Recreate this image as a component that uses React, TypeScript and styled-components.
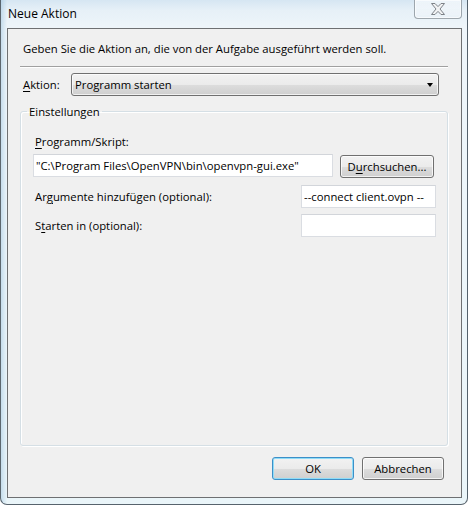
import React from "react";
import styled, { createGlobalStyle } from "styled-components";

const Global = createGlobalStyle`
  html, body { margin: 0; padding: 0; overflow: hidden; background: #ffffff; }
  body {
    font-family: "Open Sans", "Noto Sans", sans-serif;
    font-size: 11.3px;
    color: #000;
  }
  * { box-sizing: border-box; }
`;

const Window = styled.div`
  width: 468px;
  height: 505px;
  display: flex;
  flex-direction: column;
  padding: 0 5px 6px 6px;
  border: 1px solid rgba(45, 55, 65, 0.75);
  border-top: none;
  border-radius: 0 0 7px 7px;
  background:
    linear-gradient(90deg, rgba(150, 190, 220, 0.45) 0px, rgba(255, 255, 255, 0) 6px),
    linear-gradient(180deg, #d6e6f2 0px, #e6f0f7 10px, #eef5fa 28px, #eaf5f9 100%);
`;

const TitleBar = styled.div`
  height: 28px;
  display: flex;
  align-items: flex-start;
  justify-content: space-between;
`;

const Title = styled.div`
  padding-left: 1px;
  line-height: 28px;
  font-size: 12px;
  color: #000;
`;

const CloseButton = styled.div`
  width: 48px;
  height: 19px;
  display: flex;
  align-items: center;
  justify-content: center;
  border: 1px solid rgba(90, 100, 110, 0.55);
  border-top: none;
  border-radius: 0 0 4px 4px;
  background: linear-gradient(180deg, rgba(255,255,255,0.55), rgba(235,242,248,0.7));
  box-shadow: inset 0 0 0 1px rgba(255,255,255,0.6);
`;

const Client = styled.div`
  flex: 1;
  display: flex;
  flex-direction: column;
  border: 1px solid #6e7072;
  background: #f0f0f0;
  padding: 0 13px 17px 12px;
`;

const Instruction = styled.div`
  margin-top: 12px;
  padding-left: 3px;
  line-height: 15px;
`;

const Separator = styled.div`
  margin-top: 10px;
  height: 2px;
  border-top: 1px solid #a0a0a0;
  border-bottom: 1px solid #ffffff;
`;

const ActionRow = styled.div`
  margin-top: 5px;
  display: flex;
  align-items: center;
  padding-left: 3px;
  padding-right: 9px;
`;

const Label = styled.label<{ $w?: number }>`
  line-height: 15px;
  white-space: nowrap;
  ${(p) => (p.$w ? `width: ${p.$w}px; flex: none;` : "")}
  u { text-decoration: underline; text-underline-offset: 2px; }
`;

const Combo = styled.div`
  flex: 1;
  height: 23px;
  display: flex;
  align-items: center;
  justify-content: space-between;
  padding: 0 5px 0 3px;
  border: 1px solid #707070;
  border-radius: 3px;
  background: linear-gradient(180deg, #f2f2f2 0%, #ebebeb 50%, #dddddd 50%, #cfcfcf 100%);
  box-shadow: inset 0 0 0 1px rgba(255,255,255,0.7);
`;

const Arrow = styled.div`
  width: 0;
  height: 0;
  border-left: 3.5px solid transparent;
  border-right: 3.5px solid transparent;
  border-top: 4px solid #000;
`;

const Group = styled.fieldset`
  flex: 1;
  min-height: 0;
  margin: 8px 0 0 0;
  padding: 0;
  border: 1px solid #d5dfe5;
  border-radius: 3px;
  box-shadow: inset 1px 1px 0 #ffffff, 1px 1px 0 #ffffff;
`;

const Legend = styled.legend`
  margin-left: 6px;
  padding: 0 2px;
  line-height: 15px;
`;

const GroupBody = styled.div`
  display: flex;
  flex-direction: column;
  padding: 15px 11px 0 12px;
`;

const FieldLabel = styled.div`
  padding-left: 2px;
  line-height: 15px;
  u { text-decoration: underline; text-underline-offset: 2px; }
`;

const PathRow = styled.div`
  margin-top: 5px;
  display: flex;
  align-items: flex-start;
  gap: 7px;
  padding-right: 1px;
`;

const OptionRow = styled.div<{ $mt: number }>`
  margin-top: ${(p) => p.$mt}px;
  display: flex;
  align-items: center;
  justify-content: space-between;
  padding-left: 2px;
`;

const TextBox = styled.input<{ $w: number }>`
  width: ${(p) => p.$w}px;
  height: 23px;
  margin: 0;
  padding: 0 2px;
  border: 1px solid #dadde2;
  border-top-color: #d2d5da;
  background: #ffffff;
  font: inherit;
  color: #000;
  outline: none;
`;

const Button = styled.button<{ $w: number; $default?: boolean; $mt?: number }>`
  width: ${(p) => p.$w}px;
  height: 23px;
  margin: ${(p) => p.$mt || 0}px 0 0 0;
  padding: 0;
  font: inherit;
  color: #000;
  border: 1px solid ${(p) => (p.$default ? "#3c8fc8" : "#707070")};
  border-radius: 3px;
  background: linear-gradient(180deg, #f2f2f2 0%, #ebebeb 50%, #dddddd 50%, #cfcfcf 100%);
  box-shadow: inset 0 0 0 1px ${(p) => (p.$default ? "#8fdcf7" : "rgba(255,255,255,0.75)")};
  u { text-decoration: underline; text-underline-offset: 2px; }
`;

const ButtonRow = styled.div`
  margin-top: 11px;
  display: flex;
  justify-content: flex-end;
  gap: 8px;
  padding-right: 4px;
`;

const CloseGlyph = () => (
  <svg width="14" height="12" viewBox="0 0 14 12">
    <polygon
      points="0.5,0.5 4,0.5 7,3.6 10,0.5 13.5,0.5 9,6 13.5,11.5 10,11.5 7,8.4 4,11.5 0.5,11.5 5,6"
      fill="#f2f3f4"
      stroke="#7d8288"
      strokeWidth="1"
      strokeLinejoin="round"
    />
  </svg>
);

export default function App() {
  return (
    <>
      <Global />
      <Window>
        <TitleBar>
          <Title>Neue Aktion</Title>
          <CloseButton>
            <CloseGlyph />
          </CloseButton>
        </TitleBar>
        <Client>
          <Instruction>Geben Sie die Aktion an, die von der Aufgabe ausgeführt werden soll.</Instruction>
          <Separator />
          <ActionRow>
            <Label $w={48}>
              <u>A</u>ktion:
            </Label>
            <Combo>
              <span>Programm starten</span>
              <Arrow />
            </Combo>
          </ActionRow>
          <Group>
            <Legend>Einstellungen</Legend>
            <GroupBody>
              <FieldLabel>
                <u>P</u>rogramm/Skript:
              </FieldLabel>
              <PathRow>
                <TextBox
                  $w={300}
                  readOnly
                  value={'"C:\\Program Files\\OpenVPN\\bin\\openvpn-gui.exe"'}
                />
                <Button $w={94} $mt={1}>
                  D<u>u</u>rchsuchen...
                </Button>
              </PathRow>
              <OptionRow $mt={7}>
                <Label>
                  Ar<u>g</u>umente hinzufügen (optional):
                </Label>
                <TextBox $w={135} readOnly value="--connect client.ovpn --" />
              </OptionRow>
              <OptionRow $mt={6}>
                <Label>
                  S<u>t</u>arten in (optional):
                </Label>
                <TextBox $w={135} readOnly value="" />
              </OptionRow>
            </GroupBody>
          </Group>
          <ButtonRow>
            <Button $w={82} $default>
              OK
            </Button>
            <Button $w={82}>Abbrechen</Button>
          </ButtonRow>
        </Client>
      </Window>
    </>
  );
}
